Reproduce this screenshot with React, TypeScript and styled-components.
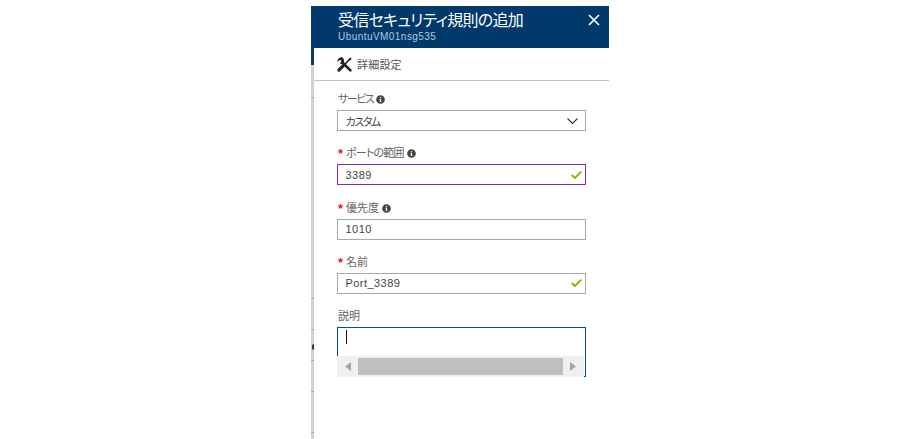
import React from "react";
import styled, { createGlobalStyle } from "styled-components";
import { FaInfoCircle } from "react-icons/fa";

const GlobalStyle = createGlobalStyle`
  html, body {
    margin: 0;
    padding: 0;
    background: #fff;
  }
`;

const tickRows = [97, 298, 329, 360, 391, 432];

function InfoIcon() {
  return <FaInfoCircle size={9} color="#444" />;
}

function Check() {
  return (
    <svg viewBox="0 0 11 8" width="11" height="8">
      <path d="M0.7 4 L4 7 L10.3 0.7" fill="none" stroke="#7fba00" strokeWidth="1.9" />
    </svg>
  );
}

function ToolsIcon() {
  return (
    <svg viewBox="0 0 15 15" width="15" height="15">
      <path
        d="M5 0.3 C2.6 -0.1 0 2 0.4 5 L2.6 3 L4.4 3.4 L4.8 5 L2.8 7 C4.4 7.4 6.4 6.6 7 5 C7.5 3.4 6.6 1 5 0.3 Z"
        fill="#222"
      />
      <path d="M5 5 L13.4 13.4" stroke="#222" strokeWidth="2.6" strokeLinecap="round" />
      <path d="M14 1 L8 7" stroke="#222" strokeWidth="1.7" />
      <path d="M12.2 0.8 L14.4 3 L12.8 3.6 L11.6 2.4 Z" fill="#222" />
      <path d="M6.6 8.4 L2 13" stroke="#222" strokeWidth="3.2" strokeLinecap="round" />
    </svg>
  );
}

export default function App() {
  return (
    <>
      <GlobalStyle />
      <Page>
        <Blade>
          {tickRows.map((y) => (
            <Tick key={y} $y={y} />
          ))}
          <Notch />
          <Header>
            <Titles>
              <Title>受信セキュリティ規則の追加</Title>
              <Subtitle>UbuntuVM01nsg535</Subtitle>
            </Titles>
            <Close viewBox="0 0 12 12" width="12" height="12">
              <path d="M1 1 L11 11 M11 1 L1 11" stroke="#fff" strokeWidth="1.6" fill="none" />
            </Close>
          </Header>
          <Body>
            <Toolbar>
              <ToolsIcon />
              <ToolLabel>詳細設定</ToolLabel>
            </Toolbar>
            <Form>
              <Field>
                <Label $squeeze={1.5}>
                  サービス <InfoIcon />
                </Label>
                <Input $pad={7}>
                  <Kana>カスタム</Kana>
                  <svg viewBox="0 0 11 6" width="11" height="6">
                    <path d="M0.5 0.5 L5.5 5.5 L10.5 0.5" fill="none" stroke="#333" strokeWidth="1.1" />
                  </svg>
                </Input>
              </Field>
              <Field>
                <Label $squeeze={0.8}>
                  <Star>*</Star>ポートの範囲 <InfoIcon />
                </Label>
                <Input $border="#8a2da5">
                  3389
                  <Check />
                </Input>
              </Field>
              <Field>
                <Label>
                  <Star>*</Star>優先度 <InfoIcon />
                </Label>
                <Input>1010</Input>
              </Field>
              <Field>
                <Label>
                  <Star>*</Star>名前
                </Label>
                <Input>
                  Port_3389
                  <Check />
                </Input>
              </Field>
              <Field>
                <Label>説明</Label>
                <TextArea>
                  <Caret />
                  <ScrollBar>
                    <svg viewBox="0 0 6 9" width="6" height="9">
                      <path d="M6 0 L0 4.5 L6 9 Z" fill="#a3a3a3" />
                    </svg>
                    <Thumb />
                    <svg viewBox="0 0 6 9" width="6" height="9">
                      <path d="M0 0 L6 4.5 L0 9 Z" fill="#a3a3a3" />
                    </svg>
                  </ScrollBar>
                </TextArea>
              </Field>
            </Form>
          </Body>
        </Blade>
      </Page>
    </>
  );
}

const Page = styled.div`
  width: 920px;
  height: 439px;
  padding: 6px 0 0 311px;
  box-sizing: border-box;
  overflow: hidden;
  font-family: "Liberation Sans", "Noto Sans CJK JP", sans-serif;
  font-feature-settings: "palt";
`;

const Blade = styled.div`
  position: relative;
  width: 298px;
  height: 433px;
  background: linear-gradient(#003a6c 0 59px, #d2d2d2 59px);
  padding-left: 3px;
  box-sizing: border-box;
`;

const Tick = styled.div<{ $y: number }>`
  position: absolute;
  left: 0;
  top: ${(p) => p.$y - 6}px;
  width: 3px;
  height: 1px;
  background: #a8a8a8;
`;

const Notch = styled.div`
  position: absolute;
  left: 1px;
  top: 338px;
  width: 2px;
  height: 6px;
  background: #333;
  border-radius: 2px 0 0 2px;
`;

const Header = styled.div`
  position: relative;
  height: 42px;
  margin-left: -3px;
  background: #003a6c;
  display: flex;
  justify-content: space-between;
  padding: 5px 9px 0 27px;
  box-sizing: border-box;
`;

const Titles = styled.div`
  display: flex;
  flex-direction: column;
`;

const Title = styled.div`
  color: #fff;
  font-size: 16px;
  line-height: 20px;
  letter-spacing: -0.7px;
`;

const Subtitle = styled.div`
  color: #b4c9dc;
  font-size: 10px;
  line-height: 11px;
  letter-spacing: 0.45px;
`;

const Close = styled.svg`
  margin-top: 3px;
`;

const Body = styled.div`
  position: relative;
  background: #fff;
  height: 391px;
`;

const Toolbar = styled.div`
  height: 33px;
  box-sizing: border-box;
  border-bottom: 1px solid #c4c4c4;
  display: flex;
  align-items: center;
  gap: 5px;
  padding-left: 23px;
`;

const ToolLabel = styled.span`
  font-size: 11px;
  color: #555;
  letter-spacing: 0.2px;
`;

const Form = styled.div`
  padding: 11px 23px 0 23px;
  display: flex;
  flex-direction: column;
  gap: 15.25px;
`;

const Field = styled.div`
  display: flex;
  flex-direction: column;
  gap: 3px;
`;

const Label = styled.div<{ $squeeze?: number }>`
  font-size: 11px;
  line-height: 15px;
  color: #636363;
  display: flex;
  align-items: center;
  gap: 3px;
  padding-left: 1px;
  letter-spacing: ${(p) => -(p.$squeeze ?? 0)}px;
`;

const Star = styled.span`
  color: #f01030;
  font-size: 13px;
  line-height: 15px;
  width: 5px;
  font-weight: bold;
  align-self: flex-start;
  letter-spacing: 0;
`;

const Input = styled.div<{ $border?: string; $pad?: number }>`
  height: 21px;
  box-sizing: border-box;
  border: 1px solid ${(p) => p.$border ?? "#a9a9a9"};
  display: flex;
  align-items: center;
  justify-content: space-between;
  padding: 0 ${(p) => p.$pad ?? 3}px 0 7.5px;
  font-size: 11px;
  color: #444;
  letter-spacing: 0.45px;
`;

const Kana = styled.span`
  letter-spacing: -1.4px;
`;

const TextArea = styled.div`
  height: 50px;
  box-sizing: border-box;
  border: 1px solid #00508f;
  position: relative;
  padding-top: 2px;
`;

const Caret = styled.div`
  width: 1px;
  height: 14px;
  background: #111;
  margin-left: 8px;
`;

const ScrollBar = styled.div`
  position: absolute;
  left: -1px;
  right: 1px;
  bottom: -1px;
  height: 21px;
  background: #f0f0f0;
  display: flex;
  align-items: center;
  justify-content: space-between;
  padding: 0 8px;
  gap: 7px;
`;

const Thumb = styled.div`
  flex: 1;
  height: 17px;
  background: #bfbfbf;
`;
